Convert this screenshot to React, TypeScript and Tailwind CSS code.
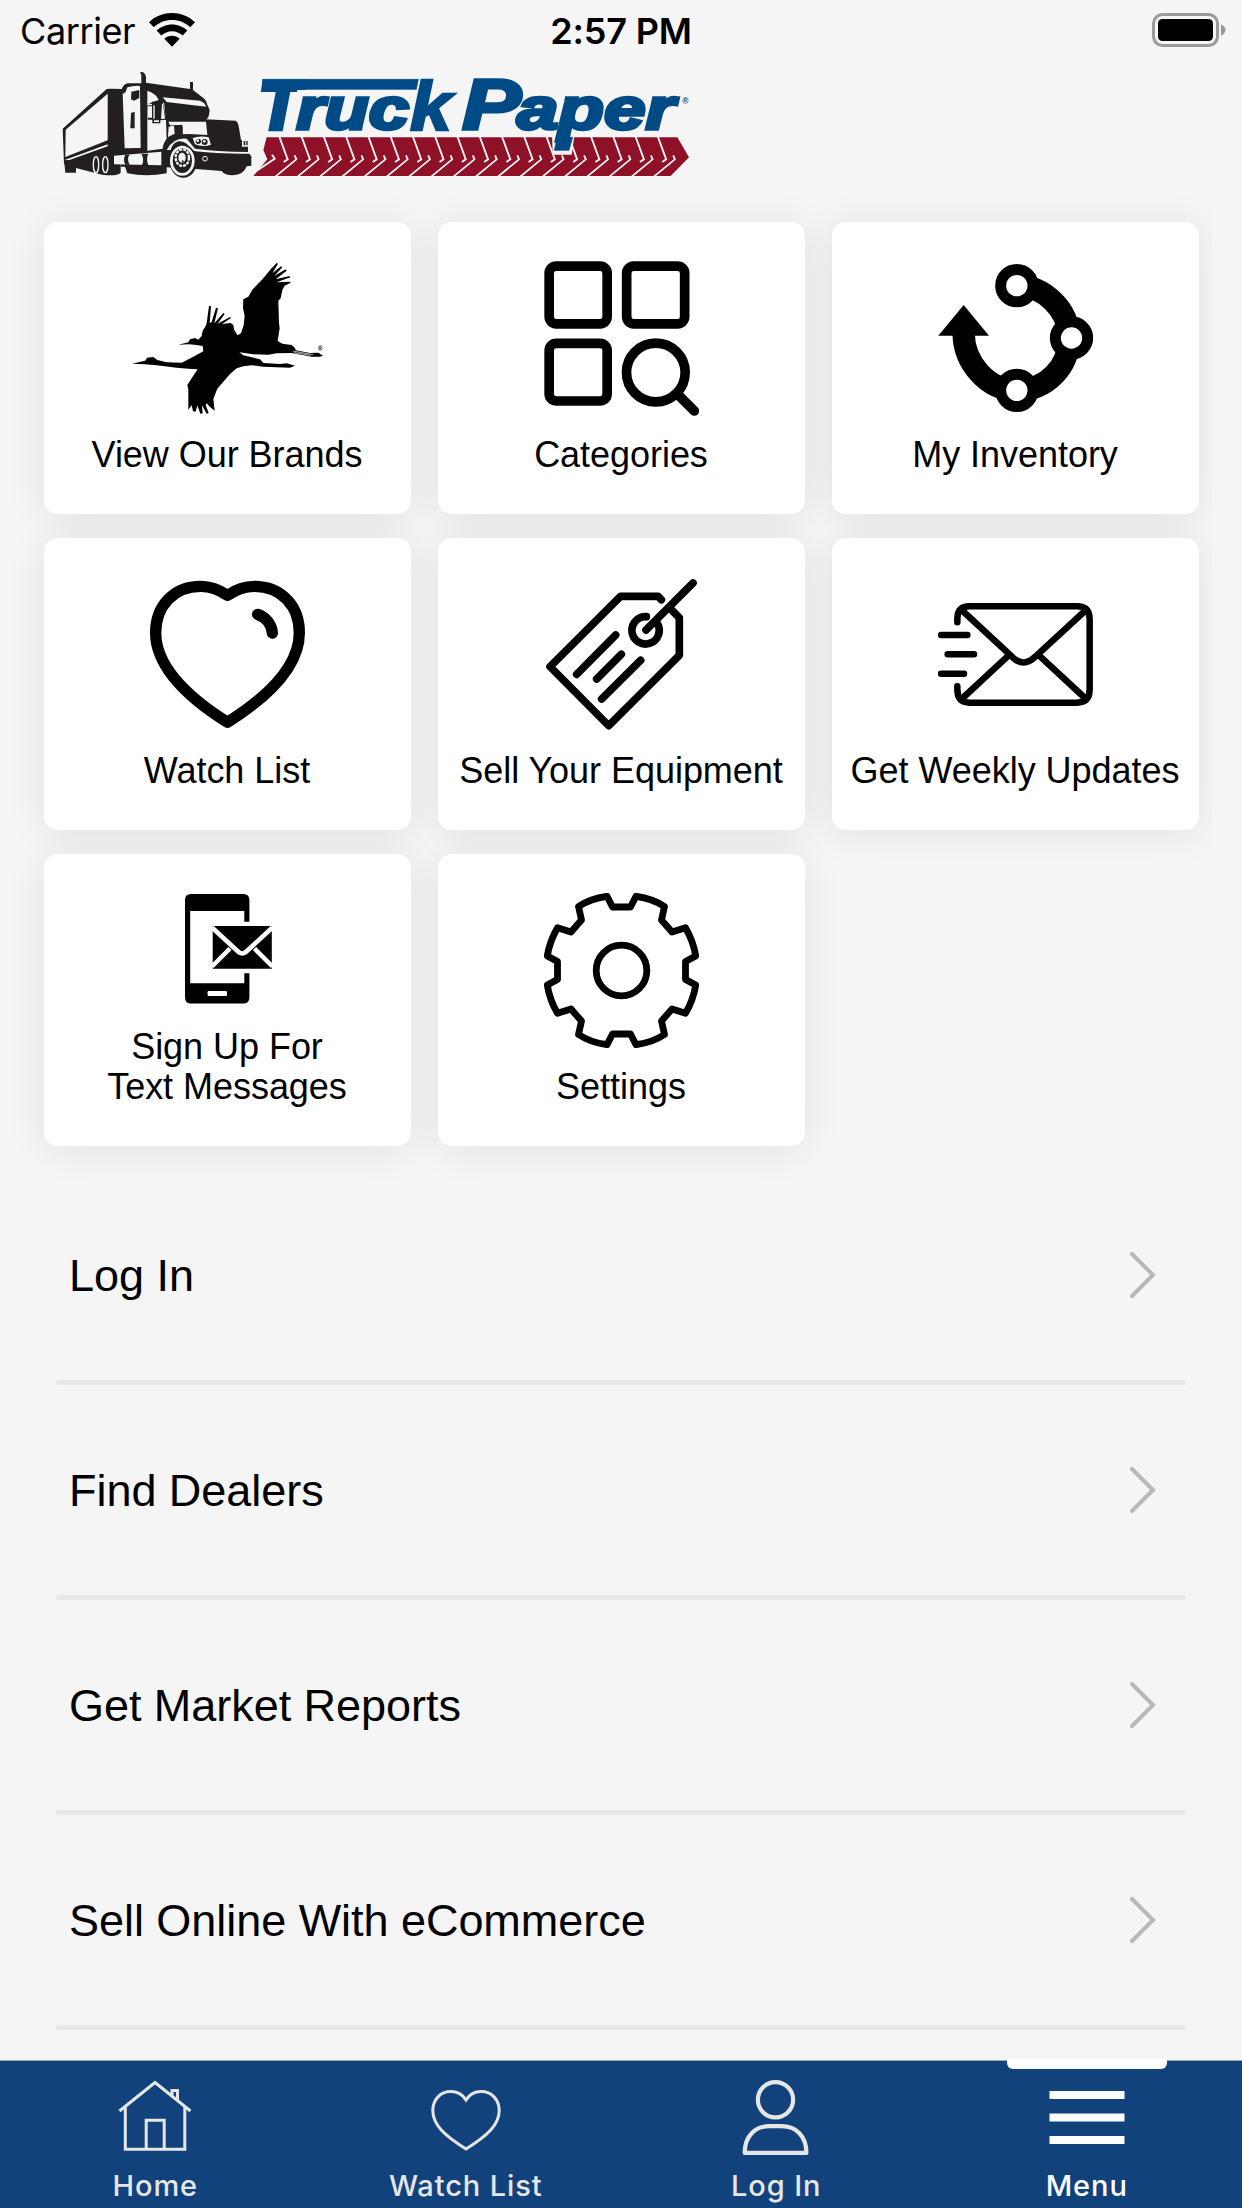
import type { ReactNode } from 'react';

function WifiIcon() {
  return (
    <svg className="h-[34px] w-[46px]" viewBox="0 0 46 34">
      <path d="M23 0C14 0 6 3.4 0 9.200l4.800 5C9.600 9.600 16 7 23 7s13.400 2.600 18.200 7.200l4.800-5C40 3.400 32 0 23 0Z" />
      <path d="M23 11.400c-6 0-11.400 2.300-15.400 6.100l4.800 5c2.800-2.600 6.500-4.200 10.600-4.200s7.800 1.600 10.600 4.200l4.800-5C34.400 13.700 29 11.400 23 11.400Z" />
      <path d="M23 22.700c-3 0-5.600 1.100-7.700 3L23 33.800l7.700-8.100c-2.100-1.900-4.700-3-7.700-3Z" />
    </svg>
  );
}

function BatteryIcon() {
  return (
    <svg className="h-[34px] w-[74px]" viewBox="0 0 74 34">
      <rect x="1.500" y="1.500" width="64" height="31" rx="9" fill="none" stroke="#9a9a9a" strokeWidth="3" />
      <rect x="6" y="6" width="55" height="22" rx="4.500" />
      <path d="M69 11.500c3 1 4.500 3 4.500 5.500S72 21.500 69 22.500Z" fill="#9a9a9a" />
    </svg>
  );
}

const TREADS = Array.from({ length: 18 }, (_, i) => i * 66.8);

function Logo() {
  return (
    <svg className="h-[130px] w-[660px]" viewBox="0 0 1980 390">
      <g fill="#231f20">
        {/* trailer */}
        <path d="M68 206 200 87l15-1 32 1 5 10-2 170 100-5v50H72Z" />
        <path d="M77 209 203 101v140L76 291Z" fill="#f5f5f5" />
        <path d="M76 299 203 253v6L78 304Z" fill="#f5f5f5" />
        {/* wheels */}
        <path d="M72 300h170v38q-12 12-56 6l-78-20v14H76Z" />
        <ellipse cx="168" cy="314" rx="8" ry="24" fill="none" stroke="#f5f5f5" strokeWidth="4" />
        <ellipse cx="196" cy="314" rx="8" ry="24" fill="none" stroke="#f5f5f5" strokeWidth="4" />
        <path d="M252 312h128v28q-60 12-118 0Z" />
        {/* cab */}
        <path d="M246 85q6-14 18-15h40V45l-4-8q14-4 18 14v17l132 19V66h9v24l26 20q14 8 16 22l8 18q-2 28-12 28l90 4q8 4 10 22l6 36q20 0 21 15V277l10 12V317L620 319Q612 344 578 346 554 346 545 333L458 326 380 322 242 320Z" />
        <path d="M262 82q20-6 38-4l2 186-48 1-6-164q8-2 10-8Z" fill="#f5f5f5" />
        <path d="m274 95 24-5v24l-16 8-9-4Zm-1 64 11-4v50h-13Z" />
        <path d="m368 112 112 10q16 6 18 18l-118-14Z" fill="#f5f5f5" />
        <path d="M324 131q12-2 14 4l4-7h30l6 52 2 56q-12 16-12 30l-46 6V92q28 10 34 28Z" fill="#f5f5f5" />
        <path d="M336 125h32l12 54-19 2v9h-24v-11h-14v-43h13Z" />
        <path d="M324 139h12v34h-13Z" fill="#f5f5f5" />
        <path d="M340 136h4v40h-4Zm26-4h3l6 44-12 1Zm-24 49h15v5h-15Z" fill="#f5f5f5" />
        <path d="M385 185h113l4 40-54-3-20 1v-26q-28-4-36 2Z" fill="#f5f5f5" />
        <path d="m386 197 40-3 2 34q-22-2-42 6Z" />
        <path d="m386 200 16-3 2 24-20 10Z" fill="#f5f5f5" />
        <path d="M458 234q22-8 48-2l7 22q-24 8-48-1Z" fill="#f5f5f5" />
        <circle cx="475" cy="244" r="8" /><circle cx="494" cy="246" r="9" />
        <circle cx="473" cy="242" r="4" fill="#f5f5f5" /><circle cx="493" cy="244" r="4" fill="#f5f5f5" />
        <path d="M606 238h19l1 22h-20Z" fill="#f5f5f5" />
        <path d="M611 243h5v13h-5Zm8 0h4v13h-4Z" />
        <path d="M380 270q20-38 60-34l25 30q60 8 163 10v5q-110 0-170-9-20-30-42-28-18 4-24 26Z" fill="#f5f5f5" />
        <path d="m222 287 142-12v41l-142-3Z" fill="#f5f5f5" />
        <path d="M256 284h13q-10 12 0 30h-13q-8-16 0-30Zm48-3h21q-8 16 0 34h-19q8-18-2-34Z" />
        {/* front wheel */}
        <ellipse cx="430" cy="304" rx="41" ry="49" />
        <ellipse cx="427" cy="302" rx="33" ry="41" fill="none" stroke="#f5f5f5" strokeWidth="8" />
        <ellipse cx="427" cy="293" rx="20" ry="25" fill="none" stroke="#f5f5f5" strokeWidth="7" strokeDasharray="9 3" />
        <ellipse cx="426" cy="293" rx="11" ry="15" fill="#f5f5f5" />
        <circle cx="428" cy="304" r="3" />
        <circle cx="495" cy="296" r="7" fill="none" stroke="#f5f5f5" strokeWidth="3" />
      </g>
      <g transform="translate(630 0)">
        {/* tyre tread */}
        <path d="M50 232H1282l35 60-55 56H10l42-50-12-28Z" fill="#8f1127" />
        <g fill="none" stroke="#f5f5f5" strokeWidth="5.500">
          <path d="m18 334 56-38-8-12" />
          {TREADS.map((x) => (
            <g key={x} transform={`translate(${x} 0)`}>
              <path d="m88 230 25 68-12 8" />
              <path d="m76 350 63-52-5-12" />
            </g>
          ))}
        </g>
        {/* wordmark */}
        <g
          fill="#004b85"
          stroke="#004b85"
          strokeWidth="10"
          fontFamily="'Liberation Sans', Arial, sans-serif"
          fontWeight="700"
          fontStyle="italic"
        >
          <path d="M38 58H505l-6 30H36Z" strokeWidth="2" />
          <text x="26" y="206" fontSize="204" strokeWidth="14" textLength="124" lengthAdjust="spacingAndGlyphs">T</text>
          <path d="M142 90H498V106H140Z" fill="#f5f5f5" stroke="none" />
          <text x="139" y="207" fontSize="176" textLength="338" lengthAdjust="spacingAndGlyphs">ruc</text>
          <text x="480" y="209" fontSize="206" strokeWidth="7" textLength="125" lengthAdjust="spacingAndGlyphs">k</text>
          <text x="637" y="207" fontSize="209" textLength="176" lengthAdjust="spacingAndGlyphs">P</text>
          <path d="M906 222h68l-9 62h-57Z" fill="#f5f5f5" stroke="none" />
          <text x="800" y="207" fontSize="176" textLength="474" lengthAdjust="spacingAndGlyphs">aper</text>
          <path d="M922 232h46l-11 39h-44Z" strokeWidth="2" />
        </g>
        <text x="1297" y="131" fontSize="25" fontWeight="700" fill="#004b85" fontFamily="'Liberation Sans', Arial, sans-serif">®</text>
      </g>
    </svg>
  );
}

function CranesIcon() {
  return (
    <svg className="size-[155px] overflow-visible" viewBox="360 153 465 465">
      <path d="M445 404 475 397 480 388 495 384 505 389 515 378 518 362 527 348 530 340 537 288 543 289 539 339 545 336 558 293 564 295 553 340 580 309 584 312 563 341 600 321 603 324 576 342 602 339 610 345 612 358 622 376 633 370 641 345 644 318 639 295 640 268 655 260 668 238 700 205 722 178 740 159 744 161 727 190 753 169 757 172 733 198 767 178 770 182 737 208 779 198 781 202 740 217 780 215 782 218 764 227 757 240 752 265 745 272 747 340 749 355 743 393 757 401 785 405 795 414 797 421 840 429 865 428 879 437 870 440 845 440 785 429 740 430 715 434 670 433 628 427 640 436 690 448 700 459 750 462 770 460 795 467 780 473 700 470 665 466 640 469 620 475 600 492 562 536 550 566 554 602 541 592 530 580 527 585 536 609 530 611 516 586 518 610 511 611 502 586 497 605 489 604 485 586 475 599 475 540 472 525 485 505 503 478 475 476 440 473 380 466 345 463 306 461 345 452 352 443 370 441 382 450 410 457 455 458 490 440 520 424 518 408 500 405 478 403Z" />
      <path d="m788 423 62 11m-58-6 50 8" stroke="#fff" strokeWidth="2" />
      <text x="863" y="422" fontSize="20" fontWeight="700" fontFamily="'Liberation Sans', sans-serif">®</text>
    </svg>
  );
}

function CategoriesIcon() {
  return (
    <svg className="size-[155px]" viewBox="342 153 465 465" fill="none" stroke="#000" strokeWidth="29">
      <rect x="357.500" y="168.500" width="174" height="173" rx="21" />
      <rect x="590" y="168.500" width="174" height="173" rx="21" />
      <rect x="357.500" y="400" width="174" height="173" rx="21" />
      <circle cx="677.500" cy="487.500" r="88" />
      <path d="m748 558 45 45" strokeLinecap="round" />
    </svg>
  );
}

function InventoryIcon() {
  return (
    <svg className="size-[155px]" viewBox="324 153 465 465">
      <path d="M401 370C401 455 470 541 560 541S717 470 717 384 640 227 560 227" fill="none" stroke="#000" strokeWidth="67" />
      <path d="m401 285 76 92H325Z" />
      <g fill="#fff" stroke="#000" strokeWidth="33">
        <circle cx="560.500" cy="227" r="48.500" />
        <circle cx="724.500" cy="384" r="48.500" />
        <circle cx="560.500" cy="541" r="48.500" />
      </g>
    </svg>
  );
}

function GlossyHeartIcon() {
  return (
    <svg className="size-[155px]" viewBox="360 141 465 465" fill="none" stroke="#000" strokeWidth="34" strokeLinecap="round" strokeLinejoin="round">
      <path d="M592.500 196C568 179 541 169 512 169 430 169 377 229 377 308 377 400 455 490 592.500 577 730 490 808 400 808 308 808 229 755 169 673 169 644 169 617 179 592.500 196Z" />
      <path d="M683 253c25 9 42 30 44 56" />
    </svg>
  );
}

function PriceTagIcon() {
  return (
    <svg className="size-[155px]" viewBox="342 141 465 465" fill="none" stroke="#000" strokeWidth="23" strokeLinecap="round" strokeLinejoin="round">
      <path d="m694 209-10-10H572L360 410 536 587 748 376V263L722 237" />
      <path d="M789 159 648 300" />
      <path d="M649 260a41 41 0 1 0 33 20" />
      <path d="M557 315 440 433M574 373 500 447M632 391 515 507" />
    </svg>
  );
}

function FastMailIcon() {
  return (
    <svg className="size-[155px]" viewBox="324 141 465 465" fill="none" stroke="#000" strokeWidth="19.500" strokeLinecap="round" strokeLinejoin="round">
      <path d="M382 277v-10q0-38 37-38h321q39 0 39 39v210q0 40-39 40H419q-37 0-37-40v-9" />
      <path d="M395 240 546 380Q580 415 616 380L768 240" />
      <path d="M395 507 536 376M768 507 627 376" />
      <path d="M333 315h79M353 373h79M333 431h69" />
    </svg>
  );
}

function PhoneMailIcon() {
  return (
    <svg className="size-[115px]" viewBox="126 39 115 115">
      <path d="M147 40h52.400q6 0 6 6v21.700h-5.100V57H146.200v72.300h54.100v-10h5.100v24.200q0 6-6 6H147q-6 0-6-6V46q0-6 6-6Z" />
      <rect x="163.600" y="137" width="19.400" height="5" rx="1.200" fill="#fff" />
      <path d="M168.700 72h59.100v42.700h-59.100Z" />
      <path d="m168 73.500 26 24q4.200 4 8.400 0l26-24M168 112.500l18-18M228.500 112.500l-18-18" fill="none" stroke="#fff" strokeWidth="4.500" />
    </svg>
  );
}

function GearIcon() {
  return (
    <svg className="size-[155px]" viewBox="-77.500 -77.500 155 155" fill="none" stroke="#000" strokeWidth="6.800" strokeLinejoin="round">
      <path d="M9 -63.500 14.500 -74.200Q31 -72 43 -64L40 -50.500 50.500 -38.500 64 -42.800Q72 -29 74.200 -14.500L64 -9V9L74.200 14.500Q72 29 64 42.800L50.500 38.500 40 50.500 43 64Q31 72 14.500 74.200L9 63.500H-9L-14.500 74.200Q-31 72 -43 64L-40 50.500 -50.500 38.500 -64 42.800Q-72 29 -74.200 14.500L-64 9V-9L-74.200 -14.500Q-72 -29 -64 -42.800L-50.500 -38.500 -40 -50.500 -43 -64Q-31 -72 -14.500 -74.200L-9 -63.500Z" />
      <circle r="25.300" />
    </svg>
  );
}

function HomeIcon() {
  return (
    <svg className="size-[84px]" viewBox="0 0 84 84" fill="none" stroke="currentColor" strokeWidth="3">
      <path d="M6.500 37 42 8.500 77.500 37M12.300 33v42.300h59.500V33M33.200 75V46.200h18V75M59 21v-4.500h5.500V26" />
    </svg>
  );
}

function HeartIcon() {
  return (
    <svg className="size-[84px]" viewBox="0 0 84 84" fill="none" stroke="currentColor" strokeWidth="3">
      <path d="M42 26C38.500 20.500 33 17.600 27 17.600 16 17.600 8.800 26 8.800 36.500 8.800 51 21 62 42 75 63 62 75.200 51 75.200 36.500 75.200 26 68 17.600 57 17.600 51 17.600 45.500 20.500 42 26Z" />
    </svg>
  );
}

function UserIcon() {
  return (
    <svg className="size-[84px]" viewBox="0 0 84 84" fill="none" stroke="currentColor" strokeWidth="4.200" strokeLinejoin="round">
      <circle cx="41.500" cy="25.800" r="17.600" />
      <path d="M10.700 78.900C10.700 62 21 52.200 35.500 52.200h12C62 52.200 72.400 62 72.400 78.900Z" />
    </svg>
  );
}

function MenuIcon() {
  return (
    <svg className="size-[84px]" viewBox="0 0 84 84" fill="currentColor">
      <path d="M4.500 17h75v8h-75ZM4.500 39.500h75v8h-75ZM4.500 62h75v8h-75Z" />
    </svg>
  );
}

const CARDS: { icon: ReactNode; lines: string[] }[] = [
  { icon: <CranesIcon />, lines: ['View Our Brands'] },
  { icon: <CategoriesIcon />, lines: ['Categories'] },
  { icon: <InventoryIcon />, lines: ['My Inventory'] },
  { icon: <GlossyHeartIcon />, lines: ['Watch List'] },
  { icon: <PriceTagIcon />, lines: ['Sell Your Equipment'] },
  { icon: <FastMailIcon />, lines: ['Get Weekly Updates'] },
  { icon: <PhoneMailIcon />, lines: ['Sign Up For', 'Text Messages'] },
  { icon: <GearIcon />, lines: ['Settings'] },
];

const ROWS = ['Log In', 'Find Dealers', 'Get Market Reports', 'Sell Online With eCommerce'];

const TABS: { icon: ReactNode; label: string; active?: boolean }[] = [
  { icon: <HomeIcon />, label: 'Home' },
  { icon: <HeartIcon />, label: 'Watch List' },
  { icon: <UserIcon />, label: 'Log In' },
  { icon: <MenuIcon />, label: 'Menu', active: true },
];

export default function App() {
  return (
    <div className="flex h-[2208px] w-[1242px] flex-col overflow-hidden bg-[#f5f5f5] font-['Liberation_Sans',Arial,sans-serif] text-black">
      <header className="grid h-[60px] shrink-0 grid-cols-3 items-center pr-4 pl-5 font-['Inter',sans-serif] text-[36px]">
        <div className="flex items-center gap-[14px]">
          <span className="pt-0.5 tracking-[-0.4px]">Carrier</span>
          <WifiIcon />
        </div>
        <span className="pt-0.5 pr-1 text-center font-semibold tracking-[-0.2px]">2:57 PM</span>
        <div className="flex justify-end">
          <BatteryIcon />
        </div>
      </header>

      <div className="h-[130px] shrink-0 pl-10">
        <Logo />
      </div>

      <main className="flex min-h-0 flex-1 flex-col overflow-hidden">
        <div className="grid w-[1212px] shrink-0 grid-cols-[repeat(3,367px)] gap-x-[27px] gap-y-6 overflow-x-clip pt-8 pl-11">
          {CARDS.map((card) => (
            <section
              key={card.lines[0]}
              className="flex h-[292px] flex-col items-center justify-end gap-[19px] rounded-[14px] bg-white pb-[39px] shadow-[0_3px_40px_rgba(0,0,0,0.08)]"
            >
              {card.icon}
              <h2 className="pr-px text-center text-[36px] leading-10 tracking-[-0.04px] whitespace-nowrap">
                {card.lines.map((line) => (
                  <span key={line} className="block">{line}</span>
                ))}
              </h2>
            </section>
          ))}
        </div>

        <ul className="mt-6 flex flex-col px-14">
          {ROWS.map((row) => (
            <li key={row} className="flex h-[215px] shrink-0 flex-col">
              <div className="flex flex-1 items-center justify-between pr-[30px] pl-[13px]">
                <span className="pt-0.5 text-[45px] tracking-[-0.04px]">{row}</span>
                <svg className="h-[46px] w-[26px]" viewBox="0 0 26 46" fill="none" stroke="#b8b8b8" strokeWidth="4">
                  <path d="m2 2 21 21L2 44" strokeLinecap="round" />
                </svg>
              </div>
              <div className="h-[5px] rounded-full bg-[#e8e8e8]" />
            </li>
          ))}
        </ul>
      </main>

      <nav className="grid h-[148px] shrink-0 grid-cols-4 border-t border-[#a3a6ab] bg-[#12427b] font-['Inter',sans-serif] text-[#e6e6e6]">
        {TABS.map((tab) => (
          <div key={tab.label} className={tab.active ? 'relative flex flex-col items-center pt-[13px] text-white' : 'relative flex flex-col items-center pt-[13px]'}>
            {tab.active && <span className="absolute -top-0.5 h-[10px] w-[160px] rounded-b-[6px] bg-white" />}
            {tab.icon}
            <span className="mt-[10px] text-[29px] leading-9 font-medium tracking-[0.9px]">{tab.label}</span>
          </div>
        ))}
      </nav>
    </div>
  );
}
